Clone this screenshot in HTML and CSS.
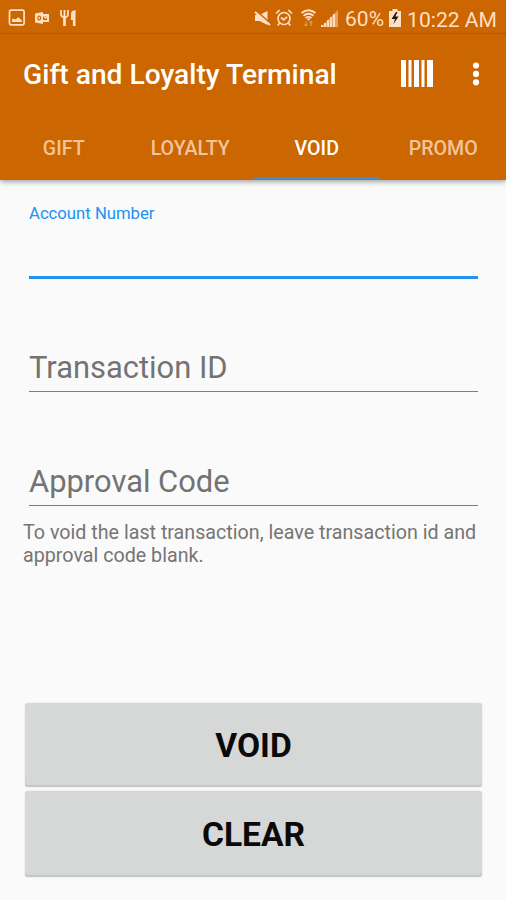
FILE: index.html
```html
<!DOCTYPE html>
<html lang="en">
<head>
<meta charset="utf-8">
<title>Gift and Loyalty Terminal</title>
<link rel="stylesheet" href="styles.css">
</head>
<body>
<header class="header">
  <div class="status">
    <div class="notifications">
      <svg width="18" height="18" viewBox="0 0 18 18"><rect x="1.5" y="1.2" width="14.6" height="14.6" rx="1.5" fill="none" stroke="currentColor" stroke-width="1.7"/><path d="M4 13V10.500l1.500-1 2 1 2.800-2.300 3.500 3V13z" fill="currentColor"/></svg>
      <svg class="outlook" width="15" height="14" viewBox="0 0 15 14"><path d="M0 2.500 8 1v12l-8-1.500z" fill="currentColor"/><path d="M8 4h5v6H8" fill="none" stroke="currentColor" stroke-width="2"/><path d="M8.500 4.500 10.500 7l2.500-2.500" fill="none" stroke="currentColor" stroke-width="1.300"/><ellipse cx="4.200" cy="7" rx="1.400" ry="1.900" fill="none" stroke="#cb6600" stroke-width="1.200"/></svg>
      <svg class="cutlery" width="17" height="18" viewBox="0 0 17 18"><path d="M1 1v4.500Q1 8 4.500 8T8 5.500V1M4.500 1v16" fill="none" stroke="currentColor" stroke-width="1.800"/><path d="M4.500 7v10" stroke="currentColor" stroke-width="2.600"/><path d="M15.500 1v16h-2.600v-6h-1.900V5q0-3.500 4.500-4z" fill="currentColor"/></svg>
    </div>
    <div class="system">
      <svg width="17" height="17" viewBox="0 0 17 17"><path d="M1 5h4.500l8-4v14l-8-4H1z" fill="currentColor"/><path d="M1 0 17 14" stroke="#cb6600" stroke-width="2"/><path d="M1 2 16 15" stroke="currentColor" stroke-width="2"/></svg>
      <svg class="alarm" width="18" height="18" viewBox="0 0 18 18" fill="none" stroke="currentColor" stroke-width="1.700"><circle cx="9" cy="9.500" r="6"/><path d="M1 4.500 4.700 1M17 4.500 13.300 1M4.700 14l-2 2.500M13.300 14l2 2.500M6 8.500l2.700 2.300 3.500-3"/></svg>
      <svg class="wifi" width="17" height="18" viewBox="0 0 17 18"><path d="M1.500 4Q8.500-1.500 15.500 4M3.500 6.700q5-4 10 0M5.500 9q3-2.300 6 0" fill="none" stroke="currentColor" stroke-width="1.800"/><path d="m6.500 9.500 2 2.500 2-2.500z" fill="currentColor"/><path d="M6 12.500V17m-1.500-1.500L6 17l1.500-1.500M11 17v-4.500M9.500 14l1.500-1.500 1.500 1.500" fill="none" stroke="currentColor" stroke-opacity=".55"/></svg>
      <svg class="signal" width="17" height="17" viewBox="0 0 17 17"><path d="M0 17 17 0v17z" fill="currentColor" opacity=".5"/><path d="M1 17v-2M4 17v-4M7 17v-7M10 17V7M13 17V4" stroke="currentColor" stroke-width="1.900"/></svg>
      <span class="percent">60%</span>
      <svg class="battery" width="12" height="18" viewBox="0 0 12 18"><path d="M3.500 0h5v2H12v16H0V2h3.500z" fill="currentColor"/><path d="M7 3 2.500 10H6l-1.500 5 5-7.500H6.300L8.500 3z" fill="#221509"/></svg>
      <span class="clock">10:22 AM</span>
    </div>
  </div>
  <div class="appbar">
    <h1 class="title">Gift and Loyalty Terminal</h1>
    <svg class="barcode" width="32" height="27" viewBox="0 0 32 27" fill="currentColor"><path d="M0 0h5v27H0zM7.500 0h3v27h-3zM13 0h5v27h-5zM20.500 0h3v27h-3zM26 0h6v27h-6z"/></svg>
    <svg class="more" width="8" height="24" viewBox="0 0 8 24" fill="currentColor"><circle cx="4" cy="3.500" r="3.100"/><circle cx="4" cy="11.900" r="3.100"/><circle cx="4" cy="20.300" r="3.100"/></svg>
  </div>
  <nav class="tabs">
    <a class="tab">GIFT</a>
    <a class="tab">LOYALTY</a>
    <a class="tab tab-active">VOID</a>
    <a class="tab">PROMO</a>
  </nav>
</header>
<main class="content">
  <form class="form">
    <div class="field field-focused"><label>Account Number</label></div>
    <div class="field field-transaction"><label>Transaction ID</label></div>
    <div class="field"><label>Approval Code</label></div>
    <p class="hint">To void the last transaction, leave transaction id and approval code blank.</p>
  </form>
  <div class="actions">
    <button class="button">VOID</button>
    <button class="button button-clear">CLEAR</button>
  </div>
</main>
</body>
</html>
```

FILE: styles.css
```css
* { box-sizing: border-box; }
body {
  margin: 0;
  height: 900px;
  display: flex;
  flex-direction: column;
  background: #fafafa;
  font-family: Roboto, sans-serif;
  overflow: hidden;
}
svg { display: block; flex: none; }
.header {
  height: 180px;
  background: #cb6600;
  color: #fff;
  box-shadow: 0 1px 6px rgba(0, 0, 0, .45);
}
.status {
  height: 34px;
  padding: 2px 9px 0 8px;
  display: flex;
  justify-content: space-between;
  color: #ffdfc5;
  box-shadow: inset 0 -2px 2px -1px rgba(120, 60, 0, .35);
}
.notifications, .system { display: flex; align-items: center; white-space: nowrap; }
.outlook { margin-left: 9px; }
.cutlery { margin-left: 10px; }
.alarm { margin-left: 4px; }
.wifi { margin-left: 7px; }
.signal { margin-left: 4px; }
.percent { margin-left: 7px; padding-top: 2px; font-size: 21px; }
.battery { margin-left: 5px; }
.clock { margin-left: 6px; padding-top: 2px; font-size: 21.1px; }
.appbar {
  height: 80px;
  padding: 0 26px 0 23px;
  display: flex;
  align-items: center;
}
.title { margin: 0 auto 0 0; font-size: 28.2px; font-weight: 500; white-space: nowrap; line-height: 32px; padding-top: 2px; }
.barcode { margin-bottom: 2px; }
.more { margin-left: 39px; margin-bottom: 1px; }
.tabs { height: 66px; display: grid; grid-template-columns: repeat(4, 1fr); }
.tab {
  padding-top: 23px;
  padding-left: 1px;
  text-align: center;
  font-size: 19.6px;
  line-height: 24px;
  font-weight: 500;
  color: #f3c49c;
}
.tab-active { color: #fff; border-bottom: 3px solid #3d8fd1; }
.content { flex: 1; display: flex; flex-direction: column; justify-content: space-between; padding: 0 24px 23px 23px; }
.field {
  height: 114px;
  margin: 0 4px 0 6px;
  padding-bottom: 5px;
  border-bottom: 1px solid #7c7c7c;
  display: flex;
  align-items: flex-end;
  font-size: 30.9px;
  line-height: 36px;
  color: #737373;
}
.field-transaction { height: 113px; }
.field-focused {
  height: 99px;
  padding-top: 24px;
  align-items: flex-start;
  border-bottom: 3px solid #2191ed;
  font-size: 16.7px;
  line-height: 20px;
  color: #2191f3;
}
.hint { margin: 15px 0 0; font-size: 19.7px; line-height: 23px; color: #757575; }
.actions { display: flex; flex-direction: column; gap: 4px; margin-left: 2px; }
.button {
  height: 84px;
  padding: 0;
  border: 0;
  border-radius: 3px;
  background: #d6d8d7;
  box-shadow: inset 0 -2px 1px #c5c7c6, 0 0 2px rgba(0, 0, 0, .12);
  color: #0a0a0a;
  font: 700 33.6px Roboto, sans-serif;
}
.button-clear { height: 86px; }
```
